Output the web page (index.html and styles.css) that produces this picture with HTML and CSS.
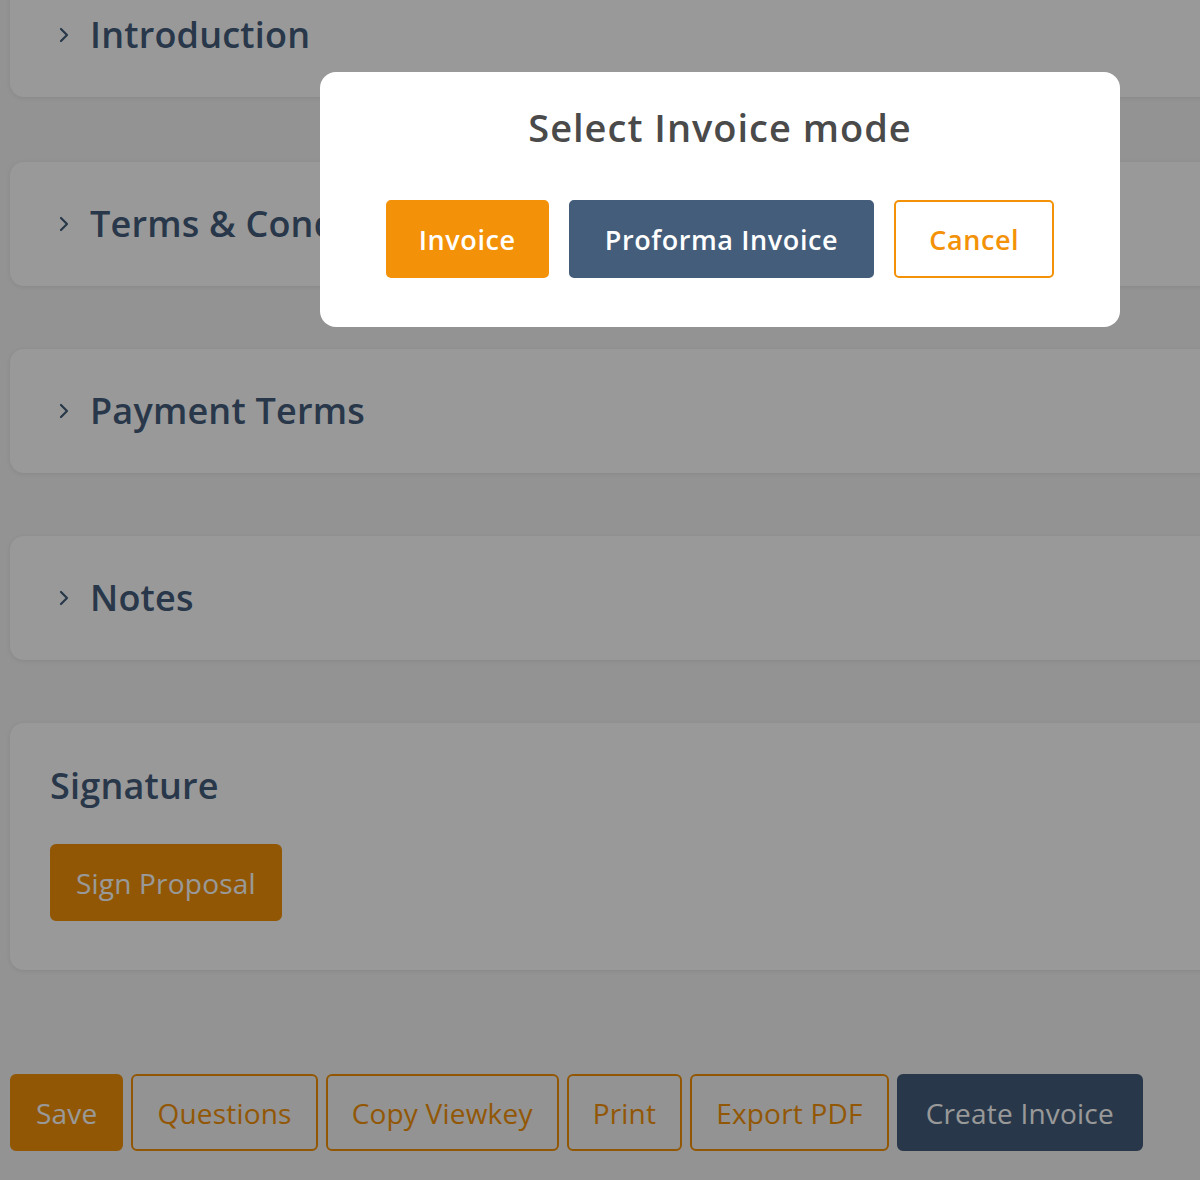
FILE: index.html
```html
<!DOCTYPE html>
<html lang="en">
<head>
    <meta charset="UTF-8">
    <meta name="viewport" content="width=device-width, initial-scale=1.0">
    <title>Proposal</title>
    <link rel="stylesheet" href="styles.css">
</head>
<body>
    <div class="page">
        <!-- Collapsible sections -->
        <div class="section collapsible">
            <svg class="chevron" viewBox="0 0 12 16" width="12" height="16"><polyline points="3,2 9,8 3,14" fill="none" stroke="currentColor" stroke-width="2.2" stroke-linecap="round" stroke-linejoin="round"/></svg>
            <h2>Introduction</h2>
        </div>
        <div class="section collapsible">
            <svg class="chevron" viewBox="0 0 12 16" width="12" height="16"><polyline points="3,2 9,8 3,14" fill="none" stroke="currentColor" stroke-width="2.2" stroke-linecap="round" stroke-linejoin="round"/></svg>
            <h2>Terms &amp; Conditions</h2>
        </div>
        <div class="section collapsible">
            <svg class="chevron" viewBox="0 0 12 16" width="12" height="16"><polyline points="3,2 9,8 3,14" fill="none" stroke="currentColor" stroke-width="2.2" stroke-linecap="round" stroke-linejoin="round"/></svg>
            <h2>Payment Terms</h2>
        </div>
        <div class="section collapsible">
            <svg class="chevron" viewBox="0 0 12 16" width="12" height="16"><polyline points="3,2 9,8 3,14" fill="none" stroke="currentColor" stroke-width="2.2" stroke-linecap="round" stroke-linejoin="round"/></svg>
            <h2>Notes</h2>
        </div>

        <!-- Signature -->
        <div class="section signature">
            <h2>Signature</h2>
            <button class="btn btn-orange">Sign Proposal</button>
        </div>

        <!-- Bottom actions -->
        <div class="actions">
            <button class="btn btn-orange">Save</button>
            <button class="btn btn-outline">Questions</button>
            <button class="btn btn-outline">Copy Viewkey</button>
            <button class="btn btn-outline">Print</button>
            <button class="btn btn-outline">Export PDF</button>
            <button class="btn btn-blue">Create Invoice</button>
        </div>
    </div>

    <!-- Modal -->
    <div class="overlay"></div>
    <div class="modal">
        <div class="modal-title">Select Invoice mode</div>
        <div class="modal-buttons">
            <button class="modal-btn modal-invoice">Invoice</button>
            <button class="modal-btn modal-proforma">Proforma Invoice</button>
            <button class="modal-btn modal-cancel">Cancel</button>
        </div>
    </div>
</body>
</html>
```

FILE: styles.css
```css
html, body {
    overflow: hidden;
}
body {
    margin: 0;
    background-color: #f5f5f5;
    font-family: "Open Sans", Arial, sans-serif;
}
.page {
    width: 1240px;
    margin-top: -27px;
    padding-left: 10px;
}
.section {
    background-color: white;
    border-radius: 14px;
    box-shadow: 0 1px 5px rgba(0, 0, 0, 0.08);
    margin-bottom: 63px;
    box-sizing: border-box;
}
.section:first-child {
    margin-bottom: 65px;
}
.section h2 {
    margin: 0;
    font-size: 36px;
    font-weight: 600;
    letter-spacing: 0.2px;
    color: #435d7a;
    line-height: 1.2;
}
.collapsible {
    height: 124px;
    display: flex;
    align-items: center;
    padding: 0 48px;
    gap: 20px;
    color: #435d7a;
}
.signature {
    padding: 41px 40px 49px;
}
.signature h2 {
    margin-bottom: 37px;
}
/* Buttons */
.btn {
    height: 77px;
    padding: 0 24px;
    font-family: "Open Sans", Arial, sans-serif;
    font-size: 28px;
    letter-spacing: 0.2px;
    border-radius: 6px;
    border: 2px solid #f39208;
    cursor: pointer;
    box-sizing: border-box;
}
.btn-orange {
    background-color: #f39208;
    color: white;
}
.btn-outline {
    background-color: transparent;
    color: #f39208;
}
.btn-blue {
    background-color: #435d7a;
    border-color: #435d7a;
    color: white;
    padding: 0 27px;
}
.actions {
    display: flex;
    gap: 8px;
    margin-top: 104px;
}
/* Modal */
.overlay {
    position: fixed;
    left: 0;
    top: 0;
    width: 100%;
    height: 100%;
    background-color: rgba(0, 0, 0, 0.4);
}
.modal {
    position: fixed;
    left: 320px;
    top: 72px;
    width: 800px;
    padding: 32px 0 49px;
    background-color: white;
    border-radius: 16px;
    text-align: center;
}
.modal-title {
    font-size: 38px;
    font-weight: 600;
    letter-spacing: 1px;
    color: #4a4a4a;
    line-height: 46px;
    margin-bottom: 50px;
}
.modal-buttons {
    display: flex;
    justify-content: center;
    gap: 20px;
}
.modal-btn {
    height: 78px;
    font-family: "Open Sans", Arial, sans-serif;
    font-size: 27px;
    font-weight: 600;
    letter-spacing: 0.6px;
    border-radius: 5px;
    border: 2px solid transparent;
    cursor: pointer;
}
.modal-invoice {
    background-color: #f39208;
    border-color: #f39208;
    color: white;
    padding: 0 31px;
}
.modal-proforma {
    background-color: #435d7a;
    border-color: #435d7a;
    color: white;
    padding: 0 34px;
}
.modal-cancel {
    background-color: white;
    border-color: #f39208;
    color: #f39208;
    padding: 0 33px;
}
```
